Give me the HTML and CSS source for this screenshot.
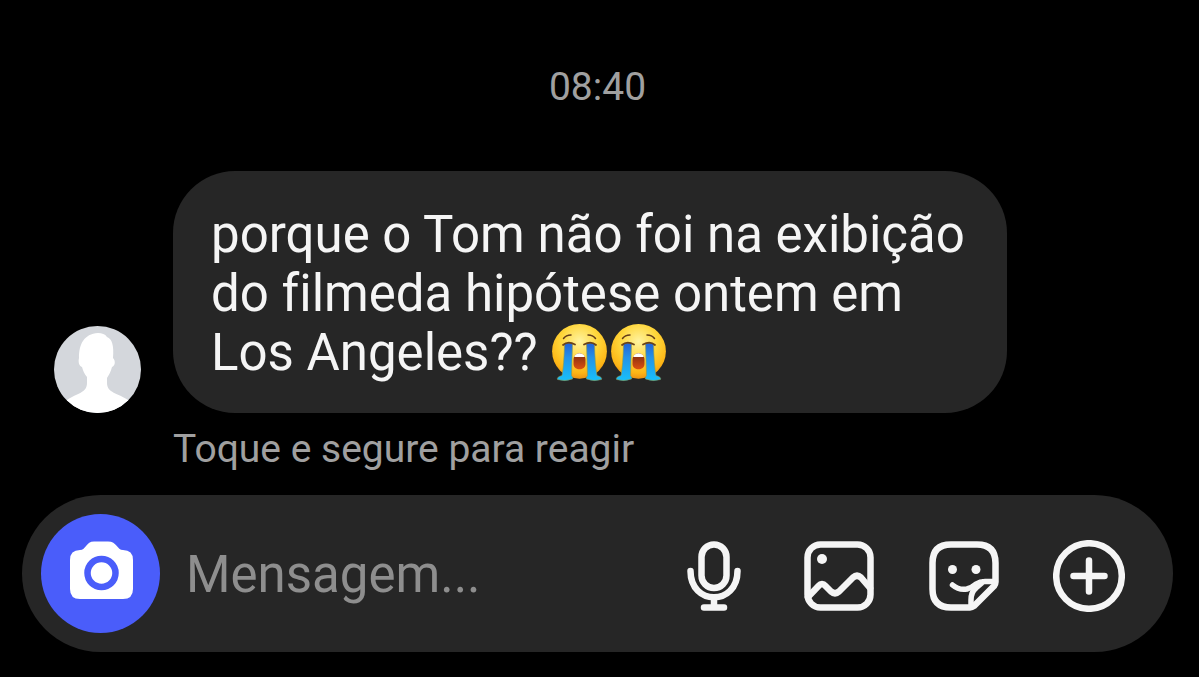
FILE: index.html
```
<!DOCTYPE html>
<html lang="pt-BR">

<head>
    <meta charset="UTF-8">
    <meta name="viewport" content="width=device-width, initial-scale=1.0">
    <title>Mensagens</title>
    <link rel="stylesheet" href="styles.css">
</head>

<body>
    <main class="chat">
        <time class="chat-time">08:40</time>

        <section class="message">
            <svg class="avatar" viewBox="0 0 87 87" role="img" aria-label="Foto do perfil">
                <clipPath id="avatarClip"><circle cx="43.5" cy="43.5" r="43.5"/></clipPath>
                <g clip-path="url(#avatarClip)">
                    <rect width="87" height="87" fill="#d4d7dc"/>
                    <path fill="#fff" d="M13 74C23 67 33 67 33 57V51C30 48 29 44 28 41C25 40 24 36 25 32C25 18 30 8 44 7C48 7 51 8 53 11C58 13 60 19 59 32C62 35 61 40 58 41C57 45 55 49 53 52V57C53 67 64 67 74 74V87H13Z"/>
                </g>
            </svg>
            <div class="message-body">
                <p class="bubble">porque o Tom não foi na exibição<br>do filmeda hipótese ontem em<br>Los Angeles?? <svg class="emoji" viewBox="0 0 59 59" role="img" aria-label="chorando">
                        <defs>
                            <radialGradient id="face" cx="50%" cy="32%" r="68%">
                                <stop offset="0" stop-color="#fff3a0"/>
                                <stop offset=".5" stop-color="#ffd63a"/>
                                <stop offset=".85" stop-color="#fdb515"/>
                                <stop offset="1" stop-color="#ee9414"/>
                            </radialGradient>
                            <linearGradient id="tear" x1="0" y1="0" x2="0" y2="1">
                                <stop offset="0" stop-color="#2561d4"/>
                                <stop offset=".4" stop-color="#2493e8"/>
                                <stop offset="1" stop-color="#18c0fa"/>
                            </linearGradient>
                            <linearGradient id="mouth" x1="0" y1="0" x2="0" y2="1">
                                <stop offset="0" stop-color="#7d2b12"/>
                                <stop offset="1" stop-color="#dc5010"/>
                            </linearGradient>
                            <g id="crying">
                                <circle cx="29.5" cy="28.3" r="27.4" fill="url(#face)"/>
                                <g id="cryingSide">
                                    <path d="M13.5 15.5Q16 12 21 12" fill="none" stroke="#633b17" stroke-width="1.5" stroke-linecap="round"/>
                                    <path fill="url(#tear)" stroke="#8a9a50" stroke-width=".6" d="M14.5 21Q19 18.5 22.5 21L21.500 52.500Q23.500 55 22.500 56Q15 59 7.500 56.500Q6.500 54 12 52.500Q14 42 14.500 21Z"/>
                                    <path d="M13 22Q18 17.5 25 21.5" fill="none" stroke="#6a4219" stroke-width="1.8" stroke-linecap="round"/>
                                </g>
                                <use href="#cryingSide" transform="matrix(-1 0 0 1 59 0)"/>
                                <path fill="url(#mouth)" d="M23.500 37C23.500 28 35.500 28 35.500 37V41C35.500 48 23.500 48 23.500 41Z"/>
                                <path fill="#fff" d="M24.200 34C25.500 29 33.500 29 34.800 34Z"/>
                            </g>
                        </defs>
                        <use href="#crying"/>
                    </svg><svg class="emoji" viewBox="0 0 59 59" role="img" aria-label="chorando"><use href="#crying"/></svg></p>
                <p class="hint">Toque e segure para reagir</p>
            </div>
        </section>

        <form class="composer">
            <button class="camera-btn" type="button" aria-label="Câmera">
                <svg viewBox="0 0 119 119">
                    <path fill="#fff" d="M53 27.500H67C76 27.500 76 36 82 36Q92 36 92 46V75Q92 85 82 85H39Q29 85 29 75V46Q29 36 39 36C45 36 45 27.500 53 27.500Z"/>
                    <circle cx="60.500" cy="59" r="14" fill="#fff" stroke="#4a5dfa" stroke-width="6.500"/>
                </svg>
            </button>
            <input class="message-input" type="text" placeholder="Mensagem..." aria-label="Mensagem">
            <div class="tools">
                <button class="tool-btn" type="button" aria-label="Gravar áudio">
                    <svg viewBox="0 0 72 72">
                        <rect x="23.500" y="4.500" width="25" height="43.500" rx="12.500"/>
                        <path d="M12.500 31C12.500 66 59.500 66 59.500 31M36 58V67M26 67.500H46"/>
                    </svg>
                </button>
                <button class="tool-btn" type="button" aria-label="Enviar imagem">
                    <svg viewBox="0 0 72 72">
                        <rect x="4.500" y="4.500" width="63" height="63" rx="13"/>
                        <path d="M5 57L15.500 46Q19 42 22.500 46L28 51.500Q32 55 36 51.500L50 37.500Q54 34 58 37.500L67 48"/>
                        <circle class="dot" cx="19" cy="19" r="5"/>
                    </svg>
                </button>
                <button class="tool-btn" type="button" aria-label="Figurinhas">
                    <svg viewBox="0 0 72 72">
                        <path d="M42 67.500H23Q4.500 67.500 4.500 49V23Q4.500 4.500 23 4.500H49Q67.500 4.500 67.500 23V42Q67.500 44 66 46L46 66Q44 67.500 42 67.500Z"/>
                        <path stroke-width="5.500" d="M24.500 45Q31 50.500 39 49Q44 47.500 48 44Q52 41.500 57 41.500H66M43 66V60Q43 52 48 48L55 42"/>
                        <circle class="dot" cx="24.500" cy="29.500" r="4.500"/>
                        <circle class="dot" cx="48" cy="29.500" r="4.500"/>
                    </svg>
                </button>
                <button class="tool-btn" type="button" aria-label="Mais opções">
                    <svg viewBox="0 0 72 72">
                        <circle cx="36" cy="36" r="32.800"/>
                        <path d="M36 20.500V51.500M20.500 36H51.500"/>
                    </svg>
                </button>
            </div>
        </form>
    </main>
</body>

</html>
```
FILE: styles.css
```
* {
    box-sizing: border-box;
}

body {
    margin: 0;
    background-color: #000;
    color: #f5f5f5;
    font-family: Roboto, "Liberation Sans", sans-serif;
    font-variant-ligatures: none;
}

p {
    margin: 0;
}

button {
    border: none;
    padding: 0;
    background: none;
    cursor: pointer;
}

svg {
    display: block;
}

.chat {
    display: flex;
    flex-direction: column;
    padding: 64px 26px 25px 22px;
}

.chat-time {
    text-align: center;
    font-size: 39px;
    line-height: 46px;
    color: #a0a0a0;
}

.message {
    display: flex;
    align-items: flex-start;
    gap: 32px;
    margin-top: 61px;
    padding-left: 32px;
}

.avatar {
    flex: none;
    width: 87px;
    height: 87px;
    margin-top: 155px;
}

.bubble {
    padding: 34px 42px 31px 38px;
    border-radius: 62px;
    background-color: #262626;
    font-size: 51px;
    line-height: 59px;
}

.emoji {
    display: inline-block;
    width: 59px;
    height: 59px;
    vertical-align: bottom;
}

.hint {
    margin-top: 13px;
    font-size: 39px;
    line-height: 46px;
    color: #a0a0a0;
}

.composer {
    display: flex;
    align-items: center;
    gap: 26px;
    margin-top: 23px;
    padding: 19px 48px 19px 19px;
    border-radius: 79px;
    background-color: #262626;
}

.camera-btn {
    flex: none;
    width: 119px;
    height: 119px;
    border-radius: 50%;
    background-color: #4a5dfa;
}

.message-input {
    flex: 1;
    min-width: 0;
    padding: 2px 0 0;
    border: none;
    outline: none;
    background: none;
    color: #f5f5f5;
    font-family: inherit;
    font-size: 51px;
    line-height: 60px;
}

.message-input::placeholder {
    color: #8e8e8e;
    opacity: 1;
}

.tools {
    display: flex;
    gap: 53px;
    padding-top: 4px;
}

.tool-btn svg {
    width: 72px;
    height: 72px;
    fill: none;
    stroke: #f5f5f5;
    stroke-width: 6.5;
    stroke-linecap: round;
    stroke-linejoin: round;
}

.tool-btn .dot {
    fill: #f5f5f5;
    stroke: none;
}
```
